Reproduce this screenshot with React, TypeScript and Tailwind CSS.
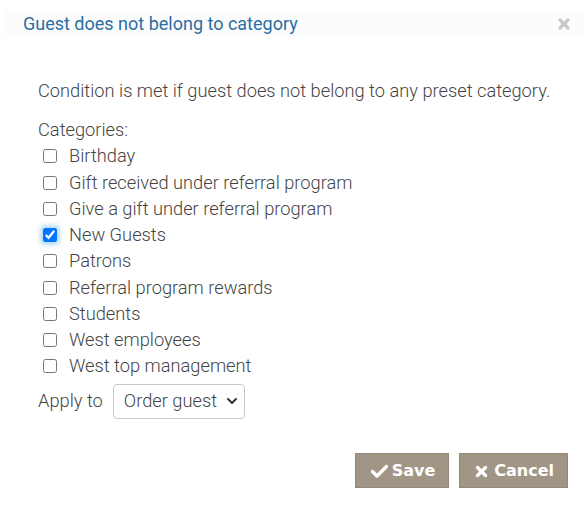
import React from "react";

const cats = [
  "Birthday",
  "Gift received under referral program",
  "Give a gift under referral program",
  "New Guests",
  "Patrons",
  "Referral program rewards",
  "Students",
  "West employees",
  "West top management",
];

export default function App() {
  return (
    <div className="w-[588px] h-[516px] bg-white flex flex-col" style={{ fontFamily: "Roboto, sans-serif" }}>
      <div className="mt-[11px] mx-[4px] h-[25px] bg-[#fcfcfc] flex items-center justify-between pl-[19px] pr-[14px]">
        <span className="text-[18px] text-[#2a6ea3] leading-[25px]">Guest does not belong to category</span>
        <svg width="12" height="12" viewBox="0 0 12 12" className="mt-[1px]">
          <path d="M2 2 L10 10 M10 2 L2 10" stroke="#c9c9c9" strokeWidth="3.2" strokeLinecap="round" />
        </svg>
      </div>
      <div className="pl-[38px] pt-[42px] font-light text-[18.25px] text-[#444]">
        <div className="leading-[26px]">Condition is met if guest does not belong to any preset category.</div>
        <div className="mt-[13px] leading-[26.25px]">Categories:</div>
        {cats.map((c) => (
          <label key={c} className="flex items-center h-[26.25px] leading-[26.25px]">
            <input
              type="checkbox"
              defaultChecked={c === "New Guests"}
              className={
                "w-[14px] h-[14px] m-0 ml-[5px] mr-[12px] " +
                (c === "New Guests" ? "shadow-[0_0_5px_2px_rgba(102,175,233,0.6)]" : "")
              }
            />
            <span>{c}</span>
          </label>
        ))}
        <div className="flex items-center mt-[4px] h-[35px]">
          <span className="mr-[10px]">Apply to</span>
          <div className="w-[132px] h-[35px] border border-[#c8c8c8] rounded-[4px] flex items-center justify-between pl-[10px] pr-[6px] text-[#444]">
            <span>Order guest</span>
            <svg width="12" height="12" viewBox="0 0 12 12">
              <path d="M2 4 L6 8 L10 4" stroke="#333" strokeWidth="2" fill="none" strokeLinecap="round" strokeLinejoin="round" />
            </svg>
          </div>
        </div>
      </div>
      <div className="flex justify-end gap-[10px] pr-[20px] mt-[34px]" style={{ fontFamily: '"DejaVu Sans", Verdana, sans-serif' }}>
        <button className="h-[35px] pl-[15px] pr-[13px] pt-[2px] bg-[#a19686] border border-[#938879] text-white text-[16px] font-bold flex items-center gap-[4px]">
          <svg width="17" height="14" viewBox="0 0 17 14">
            <path d="M1.5 7.5 L6 12 L15.5 2.5" stroke="white" strokeWidth="3.4" fill="none" strokeLinejoin="round" strokeLinecap="round" />
          </svg>
          <span>Save</span>
        </button>
        <button className="h-[35px] pl-[15px] pr-[13px] pt-[2px] bg-[#a19686] border border-[#938879] text-white text-[16px] font-bold flex items-center gap-[6px]">
          <svg width="13" height="13" viewBox="0 0 13 13">
            <path d="M2.5 2.5 L10.5 10.5 M10.5 2.5 L2.5 10.5" stroke="white" strokeWidth="3.4" strokeLinecap="round" />
          </svg>
          <span>Cancel</span>
        </button>
      </div>
    </div>
  );
}
